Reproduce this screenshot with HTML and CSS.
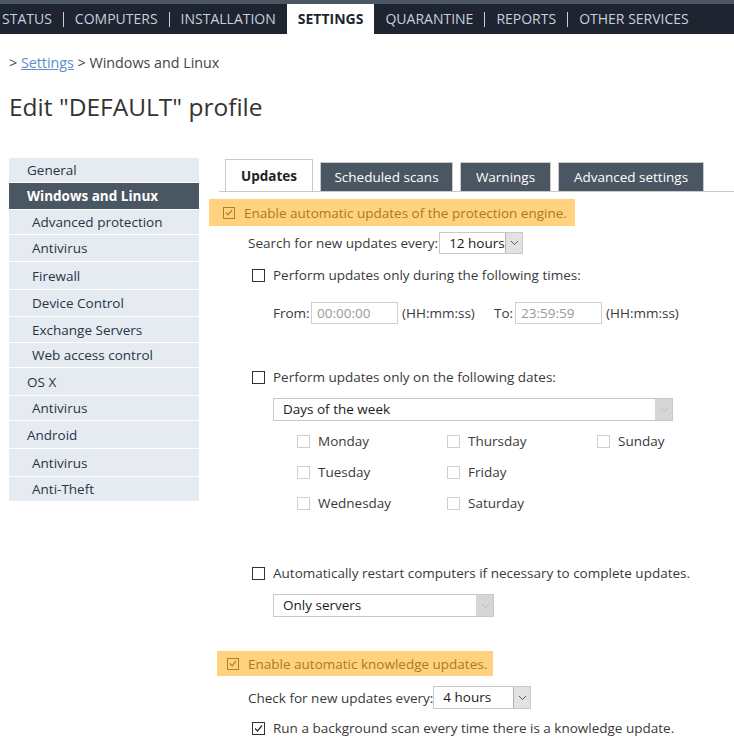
FILE: index.html
```html
<!DOCTYPE html>
<html>
<head lang="en">
    <meta charset="UTF-8">
    <title>Edit "DEFAULT" profile</title>
    <link rel="stylesheet" href="styles.css">
</head>
<body>
    <div class="topline"></div>
    <ul class="nav">
        <li class="first">STATUS</li>
        <li class="sep"></li>
        <li>COMPUTERS</li>
        <li class="sep"></li>
        <li>INSTALLATION</li>
        <li class="active">SETTINGS</li>
        <li>QUARANTINE</li>
        <li class="sep"></li>
        <li>REPORTS</li>
        <li class="sep"></li>
        <li>OTHER SERVICES</li>
    </ul>
    <div class="page">
        <div class="crumbs">&gt; <a href="#">Settings</a> &gt; Windows and Linux</div>
        <h1>Edit "DEFAULT" profile</h1>
        <div class="layout">
            <ul class="side">
                <li class="h24">General</li>
                <li class="h27 selected">Windows and Linux</li>
                <li class="sub h25">Advanced protection</li>
                <li class="sub h27">Antivirus</li>
                <li class="sub h28">Firewall</li>
                <li class="sub h27">Device Control</li>
                <li class="sub h26">Exchange Servers</li>
                <li class="sub h25">Web access control</li>
                <li class="h28">OS X</li>
                <li class="sub h25">Antivirus</li>
                <li class="h28">Android</li>
                <li class="sub h28">Antivirus</li>
                <li class="sub h25">Anti-Theft</li>
            </ul>
            <div class="panel">
                <ul class="tabs">
                    <li class="current">Updates</li>
                    <li>Scheduled scans</li>
                    <li>Warnings</li>
                    <li>Advanced settings</li>
                </ul>

                <div class="hl hl-engine">
                    <span class="cb cb-hl"><svg width="11" height="11" viewBox="0 0 11 11"><path d="M2 5.5 L4.5 8 L9 2.5" fill="none" stroke="#b47c25" stroke-width="1.3"/></svg></span>
                    Enable automatic updates of the protection engine.
                </div>

                <div class="row row-search">
                    <span class="label">Search for new updates every:</span>
                    <div class="select sel-hours">
                        <span>12 hours</span>
                        <span class="arrow"><svg width="9" height="6" viewBox="0 0 9 6"><path d="M1 1 L4.5 4.5 L8 1" fill="none" stroke="#555" stroke-width="1"/></svg></span>
                    </div>
                </div>

                <div class="row check row-times">
                    <span class="cb"></span>
                    Perform updates only during the following times:
                </div>

                <div class="row row-from">
                    <span class="label">From:</span>
                    <span class="input">00:00:00</span>
                    <span class="fmt">(HH:mm:ss)</span>
                    <span class="label to">To:</span>
                    <span class="input">23:59:59</span>
                    <span class="fmt">(HH:mm:ss)</span>
                </div>

                <div class="row check row-dates">
                    <span class="cb"></span>
                    Perform updates only on the following dates:
                </div>

                <div class="select sel-days off">
                    <span>Days of the week</span>
                    <span class="arrow"><svg width="9" height="6" viewBox="0 0 9 6"><path d="M1 1 L4.5 4.5 L8 1" fill="none" stroke="#bbb" stroke-width="1"/></svg></span>
                </div>

                <div class="days">
                    <div class="day"><span class="cb light"></span>Monday</div>
                    <div class="day"><span class="cb light"></span>Thursday</div>
                    <div class="day"><span class="cb light"></span>Sunday</div>
                    <div class="day"><span class="cb light"></span>Tuesday</div>
                    <div class="day"><span class="cb light"></span>Friday</div>
                    <div></div>
                    <div class="day"><span class="cb light"></span>Wednesday</div>
                    <div class="day"><span class="cb light"></span>Saturday</div>
                </div>

                <div class="row check row-restart">
                    <span class="cb"></span>
                    Automatically restart computers if necessary to complete updates.
                </div>

                <div class="select sel-servers off">
                    <span>Only servers</span>
                    <span class="arrow"><svg width="9" height="6" viewBox="0 0 9 6"><path d="M1 1 L4.5 4.5 L8 1" fill="none" stroke="#bbb" stroke-width="1"/></svg></span>
                </div>

                <div class="hl hl-knowledge">
                    <span class="cb cb-hl"><svg width="11" height="11" viewBox="0 0 11 11"><path d="M2 5.5 L4.5 8 L9 2.5" fill="none" stroke="#b47c25" stroke-width="1.3"/></svg></span>
                    Enable automatic knowledge updates.
                </div>

                <div class="row row-check">
                    <span class="label">Check for new updates every:</span>
                    <div class="select sel-four">
                        <span>4 hours</span>
                        <span class="arrow"><svg width="9" height="6" viewBox="0 0 9 6"><path d="M1 1 L4.5 4.5 L8 1" fill="none" stroke="#555" stroke-width="1"/></svg></span>
                    </div>
                </div>

                <div class="row check row-bg">
                    <span class="cb"><svg width="11" height="11" viewBox="0 0 11 11"><path d="M2 5.5 L4.5 8 L9 2.5" fill="none" stroke="#333" stroke-width="1.3"/></svg></span>
                    Run a background scan every time there is a knowledge update.
                </div>
            </div>
        </div>
    </div>
</body>
</html>
```

FILE: styles.css
```css
*{
    margin: 0;
    padding: 0;
    box-sizing: border-box;
}
li{
    list-style: none;
}
body{
    font-family: "Open Sans", "Liberation Sans", sans-serif;
    font-size: 13.5px;
    color: #3a3a3a;
    background: #ffffff;
    width: 734px;
    overflow: hidden;
}
.topline{
    height: 4px;
    background: #4b5763;
}
.nav{
    display: flex;
    align-items: center;
    height: 30px;
    background: #1e2531;
    padding-left: 2px;
    font-size: 14px;
}
.nav li{
    color: #c6d0dd;
    padding: 0 11px;
    height: 30px;
    line-height: 30px;
    white-space: nowrap;
}
.nav li.first{
    padding-left: 0;
}
.nav li.sep{
    padding: 0;
    width: 1px;
    height: 15px;
    background: #c6d0dd;
}
.nav li.active{
    background: #ffffff;
    color: #1e2531;
    font-weight: bold;
}
.page{
    padding-left: 9px;
}
.crumbs{
    margin-top: 20px;
    line-height: 18px;
    font-size: 14.3px;
    color: #444;
}
.crumbs a{
    color: #5b8fc9;
}
h1{
    margin-top: 20px;
    font-size: 24.5px;
    font-weight: normal;
    line-height: 30px;
    color: #333;
}
.layout{
    display: flex;
    margin-top: 36px;
}
.side{
    width: 190px;
    flex: none;
}
.side li{
    background: #e6ebf2;
    border-bottom: 1px solid #ffffff;
    padding-left: 18px;
    color: #263545;
    display: flex;
    align-items: center;
}
.side li.sub{
    padding-left: 23px;
}
.side li.selected{
    background: #4a5662;
    color: #ffffff;
    font-weight: bold;
}
.h24{ height: 25px; }
.h25{ height: 25px; }
.h26{ height: 26px; }
.h27{ height: 27px; }
.h28{ height: 28px; }
.panel{
    margin-left: 10px;
    flex: 1;
}
.tabs{
    display: flex;
    align-items: flex-end;
    margin-left: 10px;
    margin-top: 1px;
    padding-left: 6px;
    height: 33px;
    border-bottom: 1px solid #c9c9c9;
}
.tabs li{
    height: 29px;
    line-height: 29px;
    margin-right: 7px;
    background: #4a5662;
    color: #ffffff;
    border: 1px solid #c9c9c9;
    border-bottom: 0;
    text-align: center;
    white-space: nowrap;
}
.tabs li:nth-child(2){ width: 133px; }
.tabs li:nth-child(3){ width: 91px; }
.tabs li:nth-child(4){ width: 146px; }
.tabs li.current{
    height: 32px;
    line-height: 32px;
    width: 88px;
    background: #ffffff;
    color: #222;
    font-weight: bold;
}
.hl{
    display: flex;
    align-items: center;
    background: #fed27e;
    color: #b07820;
}
.hl-engine{
    margin-top: 7px;
    width: 366px;
    height: 27px;
    padding-left: 14px;
    gap: 9px;
}
.hl-knowledge{
    margin-top: 34px;
    margin-left: 8px;
    width: 276px;
    height: 25px;
    padding-left: 10px;
    gap: 9px;
}
.cb{
    display: inline-flex;
    align-items: center;
    justify-content: center;
    width: 13px;
    height: 13px;
    border: 1px solid #333;
    background: #fff;
    flex: none;
}
.cb-hl{
    width: 12px;
    height: 12px;
    border-color: #b47c25;
    background: transparent;
}
.cb.light{
    border-color: #cfcfcf;
}
.row{
    display: flex;
    align-items: center;
    height: 20px;
    white-space: nowrap;
}
.check{
    padding-left: 43px;
    gap: 8px;
}
.row-search{
    margin-top: 6px;
    height: 22px;
    padding-left: 39px;
    gap: 1px;
}
.row-check{
    margin-top: 10px;
    height: 23px;
    padding-left: 39px;
    gap: 0;
}
.row-times{
    margin-top: 11px;
}
.row-from{
    margin-top: 17px;
    height: 22px;
    padding-left: 64px;
}
.row-from .label{
    width: 38px;
}
.row-from .label.to{
    width: 21px;
}
.input{
    width: 87px;
    height: 22px;
    border: 1px solid #cfcfcf;
    color: #999;
    padding-left: 5px;
    line-height: 20px;
}
.fmt{
    width: 96px;
    padding-left: 4px;
}
.row-dates{
    margin-top: 43px;
}
.row-restart{
    margin-top: 50px;
}
.row-bg{
    margin-top: 9px;
}
.select{
    display: flex;
    align-items: stretch;
    border: 1px solid #c8c8c8;
    background: #fff;
    color: #1a1a1a;
    height: 23px;
    flex: none;
}
.select span:first-child{
    flex: 1;
    padding-left: 9px;
    line-height: 21px;
}
.select .arrow{
    width: 17px;
    flex: none;
    background: #e2e2e2;
    border-left: 1px solid #b3b3b3;
    display: flex;
    align-items: center;
    justify-content: center;
}
.select.off .arrow{
    background: #d6d6d6;
    border-left-color: #d6d6d6;
}
.sel-hours{
    width: 84px;
    height: 22px;
}
.sel-four{
    width: 98px;
}
.sel-days{
    margin-top: 11px;
    margin-left: 64px;
    width: 400px;
}
.sel-servers{
    margin-top: 11px;
    margin-left: 64px;
    width: 221px;
}
.days{
    display: grid;
    grid-template-columns: 150px 150px 150px;
    grid-auto-rows: 20px;
    row-gap: 11px;
    margin-top: 10px;
    margin-left: 88px;
}
.day{
    display: flex;
    align-items: center;
    gap: 8px;
}
```
